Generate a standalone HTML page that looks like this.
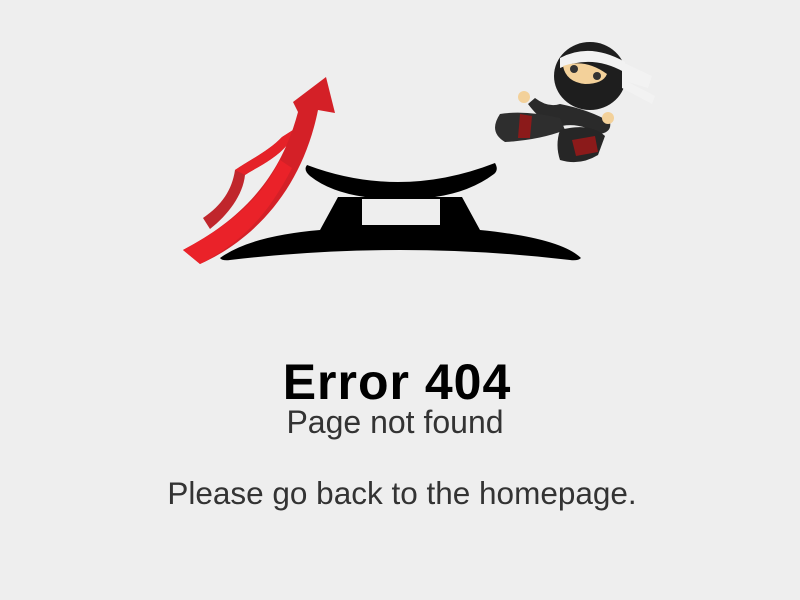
<!DOCTYPE html>
<html><head><style>
body{margin:0;width:800px;height:600px;background:#eeeeee;font-family:"Liberation Sans",Arial,sans-serif;position:relative;overflow:hidden}
.t{position:absolute;left:0;width:800px;text-align:center;white-space:nowrap}
</style></head><body>
<svg width="800" height="300" style="position:absolute;left:0;top:0">
<!-- arrows -->
<path d="M203,218 C222,205 232,190 235,170 C250,160 270,150 282,137 L293,130 L288,144 C275,160 255,168 245,175 C243,195 228,215 210,229 Z" fill="#c0262c"/>
<path d="M235,170 C250,160 270,150 282,137 L293,130 L288,144 C275,160 255,168 245,175 Z" fill="#e52228"/>
<path d="M183,250 C240,220 280,180 298,112 L293,102 L326,77 L335,113 L318,110 C303,185 258,238 200,264 Z" fill="#d42027"/>
<path d="M183,250 C230,225 260,200 280,160 L292,168 C268,215 242,242 200,264 Z" fill="#ea2229"/>
<!-- torii -->
<path d="M307,165 Q400,200 495,163 Q499,170 494,174 Q470,192 435,197 L462,197 L480,230 Q560,238 581,258 Q578,261 570,260 Q400,240 230,260 Q222,261 220,258 Q250,236 320,230 L338,197 L365,197 Q330,192 310,176 Q303,170 307,165 Z"/>
<rect x="362" y="199" width="78" height="26" fill="#eeeeee"/>
<!-- ninja -->
<g>
<ellipse cx="590" cy="76" rx="36" ry="34" fill="#1e1e1e"/>
<path d="M560,58 Q590,42 625,62 L624,72 Q592,54 560,68 Z" fill="#f2f2f2"/>
<path d="M622,62 L652,76 L648,88 L628,82 L655,96 L652,104 L622,88 Z" fill="#f2f2f2"/>
<path d="M563,66 Q585,58 607,74 Q603,84 585,84 Q566,82 563,66 Z" fill="#f3d19a"/>
<circle cx="574" cy="69" r="4" fill="#333"/><circle cx="597" cy="76" r="4" fill="#333"/>
<path d="M560,104 Q590,110 610,122 Q612,132 600,134 Q575,120 555,128 Q540,120 528,104 L535,98 Q548,108 560,104 Z" fill="#2a2a2a"/>
<path d="M500,114 Q525,110 560,118 L565,130 Q540,140 505,142 Q488,132 500,114 Z" fill="#2e2e2e"/>
<path d="M520,114 L532,116 L530,138 L518,138 Z" fill="#8b1a1a"/>
<path d="M560,130 Q590,122 605,136 L598,155 Q580,166 560,160 Q555,145 560,130 Z" fill="#262626"/>
<path d="M572,140 L595,136 L598,152 L576,156 Z" fill="#8b1a1a"/>
<circle cx="524" cy="97" r="6" fill="#f3d19a"/>
<circle cx="608" cy="118" r="6" fill="#f3d19a"/>
</g>
</svg>
<div class="t" style="top:353px;left:-3px;font-size:50px;font-weight:bold;color:#000;letter-spacing:1px">Error 404</div>
<div class="t" style="top:404px;left:-5px;font-size:32px;color:#333">Page not found</div>
<div class="t" style="top:475px;left:2px;font-size:31.5px;color:#333">Please go back to the homepage.</div>
</body></html>
